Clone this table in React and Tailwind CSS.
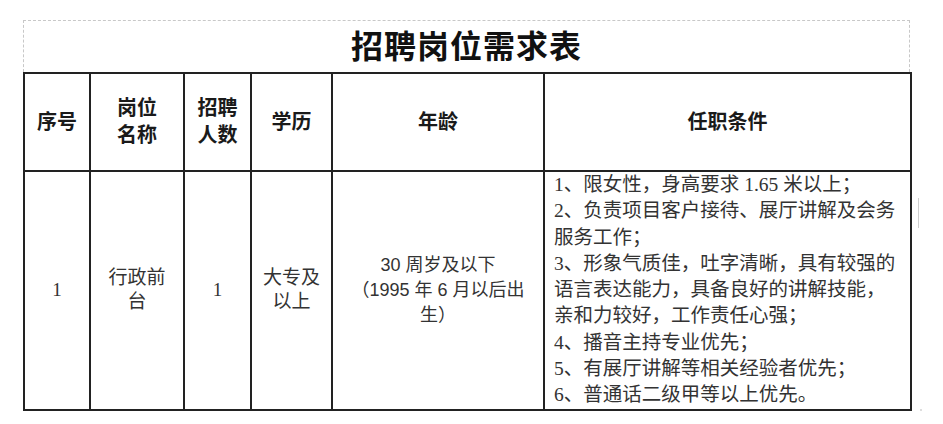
import React from 'react';

const FONT = '"Liberation Serif", "Noto Sans CJK SC", serif';
const AGE_FONT = '"Liberation Sans", "Noto Sans CJK SC", sans-serif';

const headers = [
  ['序号'],
  ['岗位', '名称'],
  ['招聘', '人数'],
  ['学历'],
  ['年龄'],
  ['任职条件'],
];

const conditions = [
  '1、限女性，身高要求 1.65 米以上；',
  '2、负责项目客户接待、展厅讲解及会务',
  '服务工作；',
  '3、形象气质佳，吐字清晰，具有较强的',
  '语言表达能力，具备良好的讲解技能，',
  '亲和力较好，工作责任心强；',
  '4、播音主持专业优先；',
  '5、有展厅讲解等相关经验者优先；',
  '6、普通话二级甲等以上优先。',
];

function Lines({ lines, className = '' }) {
  return lines.map((line) => (
    <div key={line} className={`whitespace-nowrap ${className}`}>
      {line}
    </div>
  ));
}

export default function App() {
  return (
    <div className="relative w-[943px] h-[424px] bg-white" style={{ fontFamily: FONT }}>
      <div className="pt-[20px] pl-[23px]">
        <div className="w-[887px] h-[52px] border-t border-l border-r border-dashed border-[#c8c8c8] flex items-center justify-center">
          <span className="text-[32px] font-bold text-[#111] tracking-[1px] leading-none">
            招聘岗位需求表
          </span>
        </div>

        <table className="w-[887px] table-fixed border-collapse border-2 border-[#222]">
          <colgroup>
            <col className="w-[66px]" />
            <col className="w-[94px]" />
            <col className="w-[67px]" />
            <col className="w-[81px]" />
            <col className="w-[212px]" />
            <col className="w-[367px]" />
          </colgroup>
          <thead>
            <tr className="h-[98px]">
              {headers.map((h) => (
                <th
                  key={h.join('')}
                  className="border-2 border-[#222] p-0 text-center align-middle text-[20px] font-bold text-[#1a1a1a] leading-[27px]"
                >
                  <Lines lines={h} />
                </th>
              ))}
            </tr>
          </thead>
          <tbody>
            <tr className="h-[238px] text-[19px] text-[#333]">
              <td className="border-2 border-[#222] text-center align-middle">1</td>
              <td className="border-2 border-[#222] text-center align-middle leading-[24px]">
                <Lines lines={['行政前', '台']} />
              </td>
              <td className="border-2 border-[#222] text-center align-middle">1</td>
              <td className="border-2 border-[#222] text-center align-middle leading-[24px]">
                <Lines lines={['大专及', '以上']} />
              </td>
              <td
                className="border-2 border-[#222] text-center align-middle leading-[25px] text-[18px]"
                style={{ fontFamily: AGE_FONT }}
              >
                <Lines lines={['30 周岁及以下', '（1995 年 6 月以后出', '生）']} />
              </td>
              <td className="border-2 border-[#222] align-top pl-[9px] pt-0 text-[19.5px] leading-[26.3px]">
                <Lines lines={conditions} />
              </td>
            </tr>
          </tbody>
        </table>
      </div>

      <div className="absolute left-[918px] top-[198px] w-px h-[30px] bg-[#cfcfcf]" />
      <div className="absolute left-[920px] top-[409px] w-[2px] h-[2px] bg-[#ddd]" />
    </div>
  );
}
